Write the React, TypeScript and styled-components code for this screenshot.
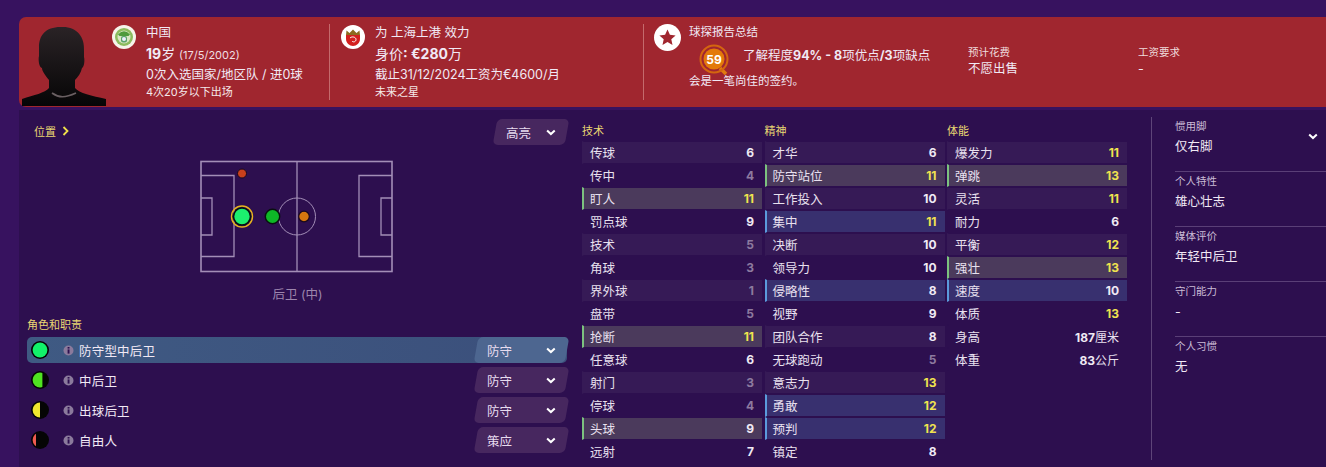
import React from "react";
import styled, { createGlobalStyle } from "styled-components";

const Global = createGlobalStyle`
  html, body { margin: 0; padding: 0; background: #37125f; }
  body { font-family: Inter, "Noto Sans CJK SC", "Liberation Sans", sans-serif; color: #f1e9f5; overflow: hidden; }
  * { box-sizing: border-box; }
`;

const Page = styled.div`
  width: 1326px; height: 467px; padding: 17px 0 0 19px; overflow: hidden;
  display: flex; flex-direction: column;
  background: #37125f;
`;
const Header = styled.header`
  height: 90px; flex: none; display: flex; background: #a0262f;
  border-radius: 7px 0 0 7px; padding: 7px 0 7px 0; position: relative;
`;
const HeaderBlock = styled.section<{ $w: number; $last?: boolean }>`
  width: ${p => p.$w}px; flex: none; display: flex; height: 76px;
  border-right: ${p => (p.$last ? "none" : "1px solid #c46a6c")};
`;
const Photo = styled.div`width: 93px; flex: none; height: 83px; margin-top: 0; overflow: hidden;`;
const Crest = styled.div`width: 24px; height: 24px; margin: 1px 10px 0 0; flex: none;`;
const Lines = styled.div`display: flex; flex-direction: column; padding-top: 1px;`;
const L1 = styled.div`font-size: 12.5px; line-height: 16px; height: 19px;`;
const L2 = styled.div`font-size: 14px; line-height: 22px; height: 22px; b { font-weight: 700; } small { font-size: 11px; font-weight: 400; color: #f0dfe2; }`;
const L3 = styled.div`font-size: 12.5px; line-height: 20px; height: 19px;`;
const L4 = styled.div`font-size: 11px; line-height: 16px; height: 16px; color: #f5e9ea;`;
const ReportIcon = styled.div`width: 27px; height: 27px; margin: 0 8px 0 10px; flex: none;`;
const Report = styled.div`width: 279px; flex: none; display: flex; flex-direction: column; padding-top: 0;`;
const ReportTitle = styled.div`font-size: 11.5px; line-height: 16px; height: 20px;`;
const ReportRow = styled.div`display: flex; align-items: flex-start; height: 30px; padding-left: 10px;`;
const Magnifier = styled.svg`width: 32px; height: 32px; flex: none; margin-right: 12px;`;
const ReportText = styled.div`font-size: 12.5px; line-height: 18px; padding-top: 3px; white-space: nowrap; b { font-weight: 700; }`;
const ReportNote = styled.div`font-size: 11.5px; line-height: 16px; margin-top: -1px;`;
const Fee = styled.div<{ $w: number }>`width: ${p => p.$w}px; flex: none; padding-top: 21px;`;
const FeeLabel = styled.div`font-size: 10.5px; line-height: 16px; color: #efdcdd;`;
const FeeValue = styled.div`font-size: 12.5px; line-height: 16px;`;

const Body = styled.main`
  flex: 1; display: flex; background: #2d0f4f; margin-top: 3px; min-height: 0;
`;
const Left = styled.div`width: 563px; flex: none; padding: 7px 15px 0 8px; display: flex; flex-direction: column;`;
const PosHead = styled.div`display: flex; justify-content: space-between; align-items: center; height: 29px; padding-left: 7px;`;
const Gold = styled.span`color: #e9d772; font-size: 11px; line-height: 16px;`;
const Sel = styled.div<{ $active?: boolean; $w?: number }>`
  width: ${p => p.$w ?? 72}px; height: 26px; flex: none; display: flex; align-items: center; justify-content: space-between;
  padding: 0 11px 0 11px; font-size: 12.5px; color: #e8dcef;
  border-radius: 5px; transform: skewX(-10deg);
  background: ${p => (p.$active ? "#4d6690" : "#47275f")};
  & > * { transform: skewX(10deg); }
`;
const PitchWrap = styled.div`display: flex; justify-content: center; margin-top: 14px; height: 114px; padding-right: 0;`;
const PosName = styled.div`text-align: center; font-size: 12.5px; color: #9d86ad; line-height: 18px; margin-top: 12px; padding-left: 1px;`;
const RolesTitle = styled.div`height: 16px; margin-top: 9px; padding-top: 0;`;
const Roles = styled.div`display: flex; flex-direction: column; margin-top: 8px;`;
const Role = styled.div<{ $on?: boolean }>`
  height: 26px; margin-bottom: 4px; display: flex; align-items: center; border-radius: 5px; padding-left: 3px;
  background: ${p => (p.$on ? "linear-gradient(90deg,#3f5a83,#3b4f7b)" : "transparent")};
`;
const RoleDot = styled.svg`width: 20px; height: 20px; flex: none; margin-right: 13px;`;
const Info = styled.svg`width: 11px; height: 11px; flex: none; margin-right: 5px;`;
const RoleName = styled.div`flex: 1; font-size: 12.5px; letter-spacing: 0.2px;`;

const Attrs = styled.div`width: 545px; flex: none; display: grid; grid-template-columns: 180px 180px 180px; column-gap: 2.5px; padding-top: 13px;`;
const AttrHead = styled.div`height: 18px; line-height: 16px; display: flex; align-items: flex-start;`;
const AttrRow = styled.div<{ $k?: string; $alt?: boolean }>`
  height: 23px; padding: 0 8px 0 6px; display: flex; align-items: center; justify-content: space-between;
  border-left: 2px solid ${p => (p.$k === "g" ? "#7cc27f" : p.$k === "b" ? "#5b9bdc" : "transparent")};
  margin-bottom: 0; border-top: 1px solid #2d0f4f; border-bottom: 1px solid #2d0f4f;
  background: ${p =>
    p.$k === "g" ? "#4b3a5c" : p.$k === "b" ? "#38306f" : p.$alt ? "#361a56" : "transparent"};
  font-size: 12.5px; color: #e9e1ef;
`;
const AttrVal = styled.span<{ $c: string }>`
  font-weight: 700; font-size: 12px; color: ${p => p.$c};
  small { font-size: 12px; font-weight: 400; color: #e9e1ef; }
`;

const Side = styled.aside`
  flex: none; width: 175px; margin: 7px 0 7px 24px; border-left: 1px solid #5e4579; padding-left: 23px; position: relative;
`;
const SideItem = styled.div`height: 55px; padding-top: 2px; border-bottom: 1px solid #5a3f77; &:last-child { border: none; }`;
const SideLabel = styled.div`font-size: 10.5px; line-height: 16px; color: #cbbcd6;`;
const SideValue = styled.div`font-size: 12.5px; line-height: 18px; margin-top: 3px;`;
const SideChevron = styled.div`position: absolute; right: 8px; top: 7px;`;

const Chevron = () => (
  <svg width="10" height="7" viewBox="0 0 10 7"><path d="M1.2 1.4 5 5 8.8 1.4" fill="none" stroke="#fff" strokeWidth="2" /></svg>
);

type A = [string, number, string?];
const tech: A[] = [["传球",6],["传中",4],["盯人",11,"g"],["罚点球",9],["技术",5],["角球",3],["界外球",1],["盘带",5],["抢断",11,"g"],["任意球",6],["射门",3],["停球",4],["头球",9,"g"],["远射",7]];
const ment: A[] = [["才华",6],["防守站位",11,"g"],["工作投入",10],["集中",11,"b"],["决断",10],["领导力",10],["侵略性",8,"b"],["视野",9],["团队合作",8],["无球跑动",5],["意志力",13],["勇敢",12,"b"],["预判",12,"b"],["镇定",8]];
const phys: A[] = [["爆发力",11],["弹跳",13,"g"],["灵活",11],["耐力",6],["平衡",12],["强壮",13,"g"],["速度",10,"b"],["体质",13]];
const colour = (v: number) => (v >= 11 ? "#f0e34f" : v <= 5 ? "#8d7a9f" : "#f0eaf4");

const Column = ({ title, rows, extra }: { title: string; rows: A[]; extra?: React.ReactNode }) => (
  <div>
    <AttrHead><Gold>{title}</Gold></AttrHead>
    {rows.map(([n, v, k], i) => (
      <AttrRow key={n} $k={k} $alt={i % 2 === 0}>
        <span>{n}</span>
        <AttrVal $c={colour(v)}>{v}</AttrVal>
      </AttrRow>
    ))}
    {extra}
  </div>
);

const Silhouette = () => (
  <svg width="93" height="83" viewBox="0 0 93 83">
    <defs>
      <linearGradient id="sil" x1="0" y1="0" x2="0" y2="1"><stop offset="0" stopColor="#2a2326" /><stop offset="1" stopColor="#060506" /></linearGradient>
    </defs>
    <path d="M18 76 C30 72 41 70 45 65 L45 57 C41 52 38 48 38 45 C35 45 34 36 35 33 L35 24 C35 12 42 3 59 4 C73 4 81 14 80 28 L80 34 C81 38 80 44 78 45 C77 50 74 54 71 57 L71 65 C75 70 88 73 102 76 L102 83 L18 83 Z" transform="translate(-15 -1)" fill="url(#sil)" />
    <path d="M33 71 C40 76 46 76 57 71" fill="none" stroke="#6a5f62" strokeWidth="1.6" transform="translate(0 -2)" />
  </svg>
);

const ChinaCrest = () => (
  <svg viewBox="0 0 24 24" width="24" height="24">
    <circle cx="12" cy="12" r="12" fill="#f6f3ea" />
    <circle cx="12" cy="12" r="9" fill="#8bbb5d" />
    <circle cx="12" cy="12" r="6.5" fill="#d9e6c3" />
    <path d="M6 9.5 Q12 3 18 9.5 L16.5 11 H7.5Z" fill="#4f9a3c" />
    <rect x="9" y="11" width="6" height="6.5" rx="2" fill="#5aa46a" />
    <circle cx="12" cy="14" r="2" fill="#eef" />
  </svg>
);
const ClubCrest = () => (
  <svg viewBox="0 0 24 24" width="24" height="24">
    <circle cx="12" cy="12" r="12" fill="#fff" />
    <path d="M5 10 H19 V14 C19 18 15.5 21 12 21 C8.5 21 5 18 5 14Z" fill="#d3201f" />
    <path d="M5 10 L5.5 5.5 L8.5 8 L12 4.5 L15.5 8 L18.5 5.5 L19 10Z" fill="#8c6b1f" />
    <path d="M9 13 C11 11 15 12 15 14.5 C15 17 12 17.5 11 16" fill="none" stroke="#fff" strokeWidth="1" />
  </svg>
);
const StarBadge = () => (
  <svg viewBox="0 0 27 27" width="27" height="27">
    <circle cx="13.5" cy="13.5" r="13.5" fill="#fff" />
    <path d="M13.5 5.5 15.9 10.8 21.6 11.4 17.3 15.2 18.5 20.9 13.5 18 8.5 20.9 9.7 15.2 5.4 11.4 11.1 10.8Z" fill="#a0262f" />
  </svg>
);

const Pitch = () => (
  <svg width="194" height="113" viewBox="0 0 194 113" fill="none" stroke="#a38eb7" strokeWidth="1.3">
    <rect x="1" y="1.5" width="191" height="110" strokeWidth="1.6" />
    <path d="M97 1.5V111.5" />
    <path d="M1 15.5H34V136" strokeOpacity="0" />
    <path d="M1 15.5H34V96.5H1" />
    <path d="M1 38H12V75H1" />
    <path d="M192 15.5H159V96.5H192" />
    <path d="M192 38H181V75H192" />
    <circle cx="97" cy="56.5" r="18.5" strokeWidth="1" />
    <circle cx="42" cy="13.5" r="4.5" fill="#c8401c" stroke="#17081f" strokeWidth="1" />
    <circle cx="42" cy="56.5" r="10.5" fill="none" stroke="#e8b41e" strokeWidth="1.4" />
    <circle cx="42" cy="56.5" r="8.5" fill="#1cf06e" stroke="#08110e" strokeWidth="1.6" />
    <circle cx="72.5" cy="56.5" r="7.2" fill="#0eb827" stroke="#08110e" strokeWidth="1.4" />
    <circle cx="104" cy="56.5" r="5.3" fill="#d4760e" stroke="#17081f" strokeWidth="1.2" />
  </svg>
);

const Dot = ({ color, frac }: { color: string; frac: number }) => (
  <RoleDot viewBox="0 0 20 20">
    <defs><clipPath id={`d${color.slice(1)}`}><rect x="0" y="0" width={20 * frac} height="20" /></clipPath></defs>
    <circle cx="10" cy="10" r="9" fill="#050505" />
    <circle cx="10" cy="10" r="7.4" fill={color} clipPath={`url(#d${color.slice(1)})`} />
  </RoleDot>
);

const InfoIcon = () => (
  <Info viewBox="0 0 11 11">
    <circle cx="5.5" cy="5.5" r="5" fill="#8b7a9c" />
    <rect x="4.6" y="4.4" width="1.9" height="4.2" fill="#2d0f4f" />
    <rect x="4.6" y="2" width="1.9" height="1.6" fill="#2d0f4f" />
  </Info>
);

const roles: [string, string, string, number][] = [
  ["防守型中后卫", "防守", "#12f26a", 1],
  ["中后卫", "防守", "#4fe221", 0.62],
  ["出球后卫", "防守", "#f0e62f", 0.5],
  ["自由人", "策应", "#ef5b50", 0.3],
];
const side: [string, string][] = [["惯用脚","仅右脚"],["个人特性","雄心壮志"],["媒体评价","年轻中后卫"],["守门能力","-"],["个人习惯","无"]];

export default function App() {
  return (
    <Page>
      <Global />
      <Header>
        <HeaderBlock $w={311}>
          <Photo><Silhouette /></Photo>
          <Crest><ChinaCrest /></Crest>
          <Lines>
            <L1>中国</L1>
            <L2><b>19</b>岁 <small>(17/5/2002)</small></L2>
            <L3>0次入选国家/地区队 / 进0球</L3>
            <L4>4次20岁以下出场</L4>
          </Lines>
        </HeaderBlock>
        <HeaderBlock $w={314}>
          <Crest style={{ marginLeft: 11 }}><ClubCrest /></Crest>
          <Lines>
            <L1>为 上海上港 效力</L1>
            <L2>身价<b>: €280</b>万</L2>
            <L3>截止31/12/2024工资为€4600/月</L3>
            <L4>未来之星</L4>
          </Lines>
        </HeaderBlock>
        <HeaderBlock $w={650} $last>
          <ReportIcon><StarBadge /></ReportIcon>
          <Report>
            <ReportTitle>球探报告总结</ReportTitle>
            <ReportRow>
              <Magnifier viewBox="0 0 32 32">
                <path d="M21 24 27 30" stroke="#e07a10" strokeWidth="3.5" />
                <circle cx="15" cy="15" r="13.5" fill="none" stroke="#d4660f" strokeWidth="2" />
                <circle cx="15" cy="15" r="10.5" fill="#e3790a" />
                <text x="15" y="19.5" textAnchor="middle" fontSize="12" fontWeight="700" fill="#fff" fontFamily="Inter, sans-serif">59</text>
              </Magnifier>
              <ReportText>了解程度<b>94% - 8</b>项优点<b>/3</b>项缺点</ReportText>
            </ReportRow>
            <ReportNote>会是一笔尚佳的签约。</ReportNote>
          </Report>
          <Fee $w={170}><FeeLabel>预计花费</FeeLabel><FeeValue>不愿出售</FeeValue></Fee>
          <Fee $w={150}><FeeLabel>工资要求</FeeLabel><FeeValue>-</FeeValue></Fee>
        </HeaderBlock>
      </Header>
      <Body>
        <Left>
          <PosHead>
            <Gold>位置 &nbsp;<svg width="7" height="10" viewBox="0 0 7 10"><path d="M1.5 1 5.5 5 1.5 9" fill="none" stroke="#f0e14a" strokeWidth="1.8" /></svg></Gold>
            <Sel><span>高亮</span><Chevron /></Sel>
          </PosHead>
          <PitchWrap><Pitch /></PitchWrap>
          <PosName>后卫 (中)</PosName>
          <RolesTitle><Gold>角色和职责</Gold></RolesTitle>
          <Roles>
            {roles.map(([name, duty, c, f], i) => (
              <Role key={name} $on={i === 0}>
                <Dot color={c} frac={f} />
                <InfoIcon />
                <RoleName>{name}</RoleName>
                <Sel $active={i === 0} $w={91}><span>{duty}</span><Chevron /></Sel>
              </Role>
            ))}
          </Roles>
        </Left>
        <Attrs>
          <Column title="技术" rows={tech} />
          <Column title="精神" rows={ment} />
          <Column title="体能" rows={phys} extra={<>
            <AttrRow><span>身高</span><AttrVal $c="#f0eaf4">187<small>厘米</small></AttrVal></AttrRow>
            <AttrRow><span>体重</span><AttrVal $c="#f0eaf4">83<small>公斤</small></AttrVal></AttrRow>
          </>} />
        </Attrs>
        <Side>
          <SideChevron><Chevron /></SideChevron>
          {side.map(([l, v]) => (
            <SideItem key={l}><SideLabel>{l}</SideLabel><SideValue>{v}</SideValue></SideItem>
          ))}
        </Side>
      </Body>
    </Page>
  );
}
